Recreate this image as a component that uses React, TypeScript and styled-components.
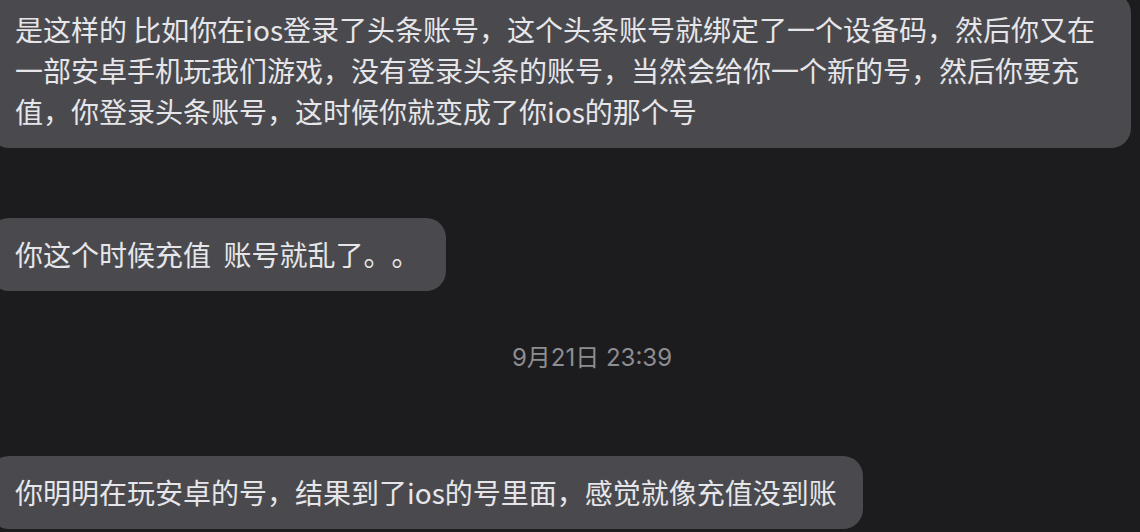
import React from 'react'
import styled, { createGlobalStyle } from 'styled-components'

const GlobalStyle = createGlobalStyle`
	html, body {
		margin: 0;
		padding: 0;
		background: #1c1c1e;
		overflow: hidden;
	}
`

const Thread = styled.div`
	display: flex;
	flex-direction: column;
	align-items: flex-start;
	width: 1140px;
	height: 532px;
	overflow: hidden;
	font-family: 'Noto Sans CJK SC', 'Noto Sans', sans-serif;
	text-spacing-trim: space-all;
`

const Bubble = styled.div<{ $wide?: boolean; $gap: number }>`
	box-sizing: border-box;
	margin: ${(p) => p.$gap}px 0 0 -11px;
	padding: 16px 26px;
	width: ${(p) => (p.$wide ? '1142px' : 'auto')};
	border-radius: 20px;
	background: #4a4a4e;
	color: #e6e6ea;
	font-size: 28px;
	line-height: 41px;
	white-space: pre;
`

const Stamp = styled.div`
	align-self: stretch;
	box-sizing: border-box;
	margin-top: 51px;
	padding-left: 44px;
	height: 32px;
	line-height: 32px;
	text-align: center;
	color: #8d8d92;
	font-family: Inter, 'Noto Sans CJK SC', sans-serif;
	font-size: 24px;
`

const Line = styled.span`
	display: block;
`

const firstLines = [
	'是这样的 比如你在ios登录了头条账号，这个头条账号就绑定了一个设备码，然后你又在',
	'一部安卓手机玩我们游戏，没有登录头条的账号，当然会给你一个新的号，然后你要充',
	'值，你登录头条账号，这时候你就变成了你ios的那个号',
]

const App = () => (
	<>
		<GlobalStyle />
		<Thread>
			<Bubble $wide $gap={-7}>
				{firstLines.map((l) => (
					<Line key={l}>{l}</Line>
				))}
			</Bubble>
			<Bubble $gap={70}>你这个时候充值  账号就乱了。。</Bubble>
			<Stamp>9月21日 23:39</Stamp>
			<Bubble $gap={82}>你明明在玩安卓的号，结果到了ios的号里面，感觉就像充值没到账</Bubble>
		</Thread>
	</>
)

export default App
